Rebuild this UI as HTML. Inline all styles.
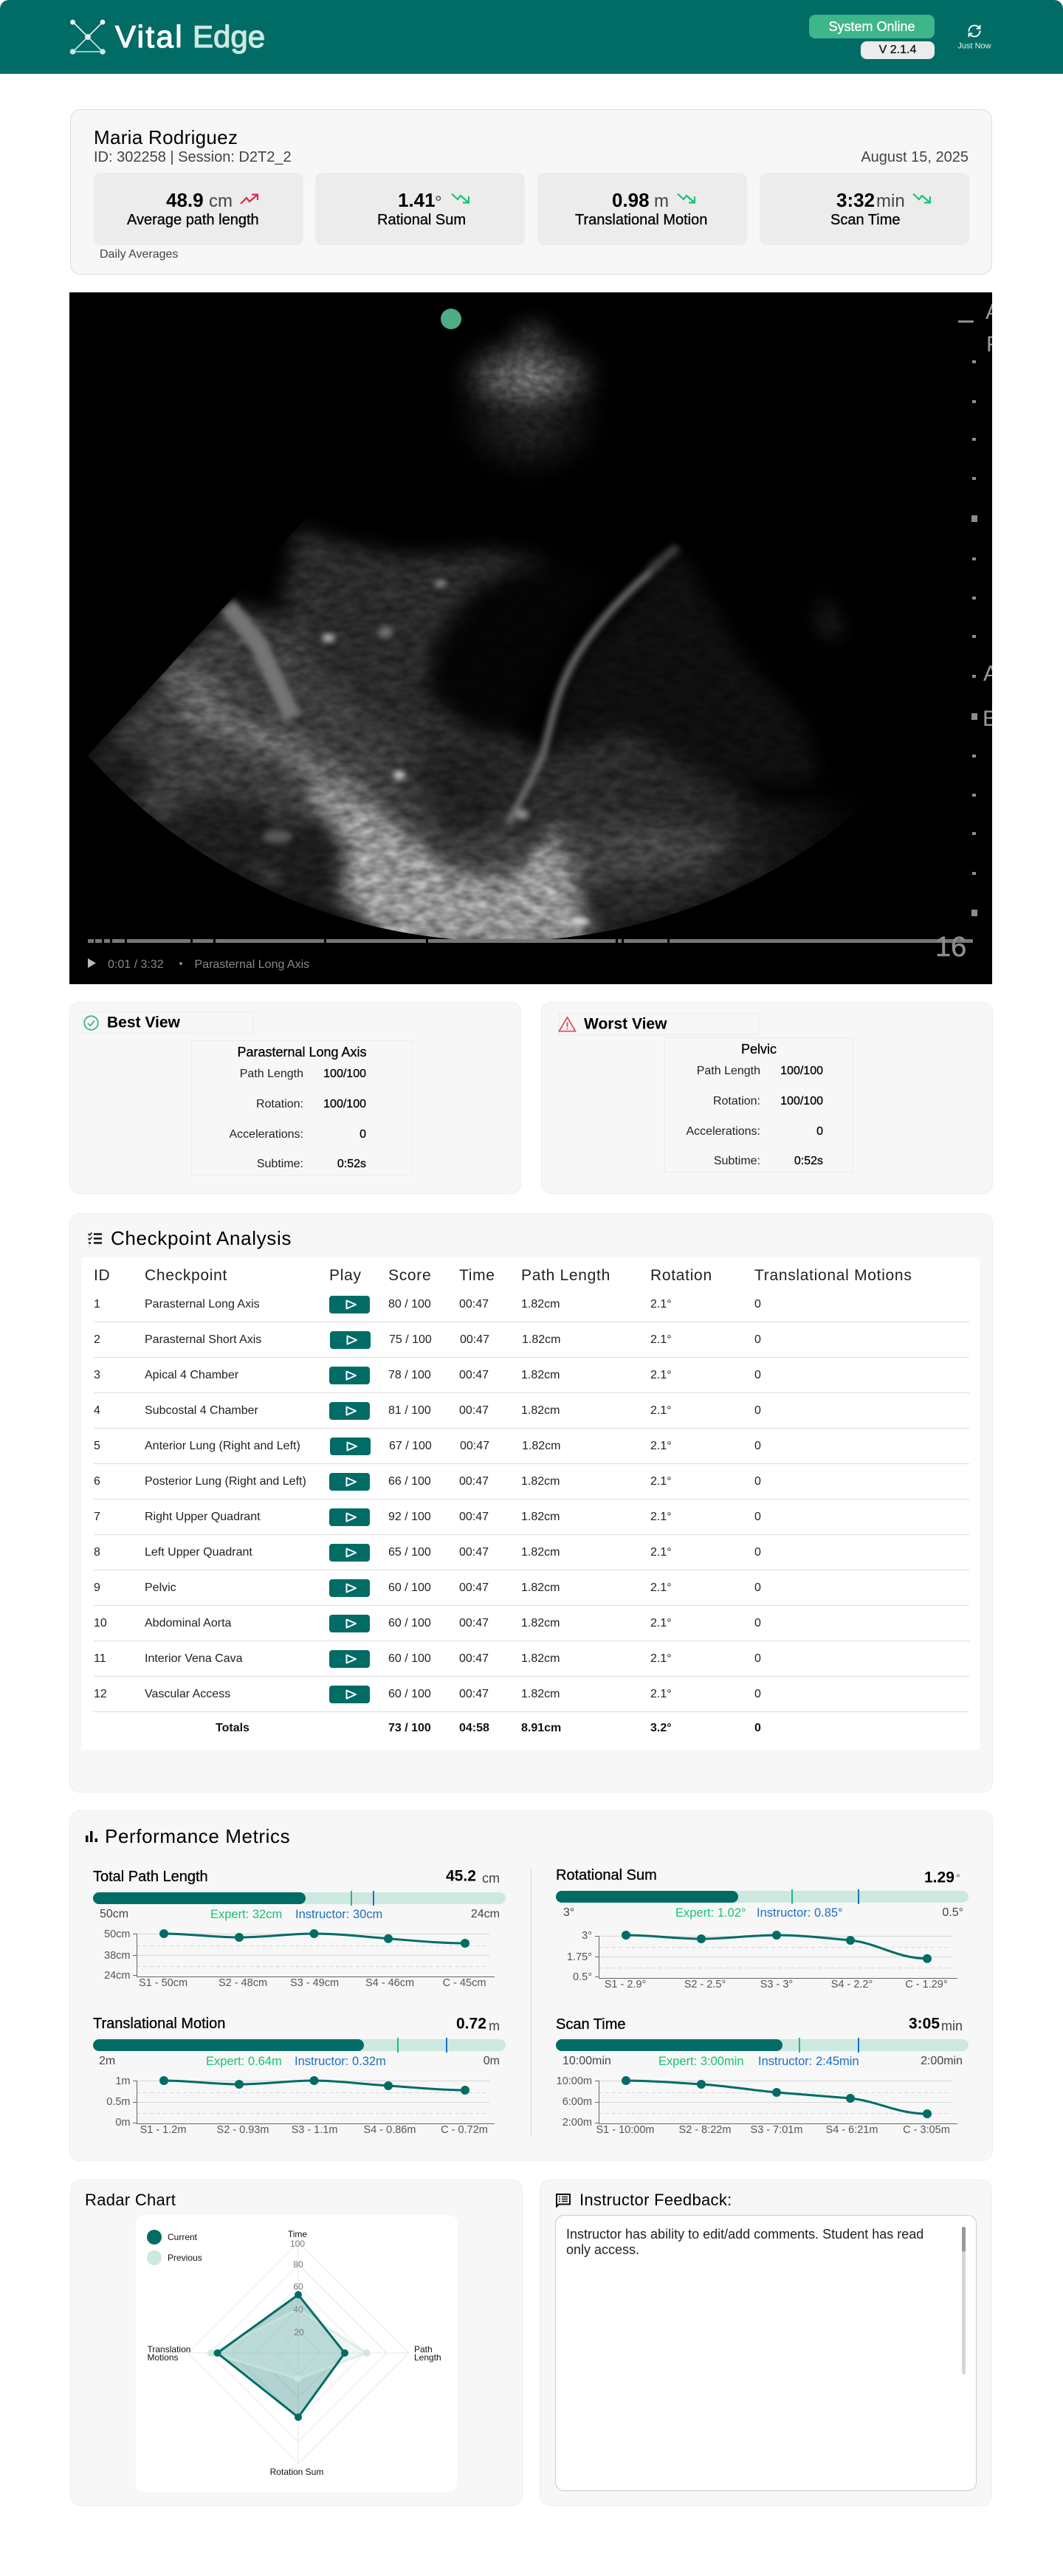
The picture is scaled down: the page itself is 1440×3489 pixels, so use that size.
<!DOCTYPE html>
<html lang="en"><head><meta charset="utf-8"><title>Vital Edge</title>
<style>
html,body{margin:0;padding:0;background:#fff}
body{position:relative;width:1440px;height:3489px;overflow:hidden;font-family:"Liberation Sans",Arial,sans-serif;color:#000}
.a{position:absolute;box-sizing:border-box}
.t{position:absolute;white-space:nowrap;line-height:1;transform:translateY(-50%)}
.c{transform:translate(-50%,-50%)}
.m{-webkit-text-stroke:.3px currentColor}
.card{position:absolute;box-sizing:border-box;background:#f7f7f7;border:1px solid #eee;border-radius:14px}
.box{position:absolute;box-sizing:border-box;background:#ececec;border-radius:10px;top:234px;width:284px;height:98px}
.val{font-size:26px;font-weight:bold}
.unit{font-size:24px;color:#444}
.lab{font-size:20px;top:298px}
.bx{position:absolute;box-sizing:border-box;border:1px solid #ebebeb}
.f16{font-size:16px}.b{font-weight:bold}
.title{font-size:26px;letter-spacing:.65px}
.g{color:#17c274}.bl{color:#1a6fc4}.gr{color:#444}
.bar{position:absolute;height:16px;background:#cde8e1;border-radius:8px}
.fill{position:absolute;height:16px;background:#016c66;border-radius:8px}
.mk{position:absolute;width:2px;height:20px}
table{position:absolute;left:127px;top:1712px;width:1186px;border-collapse:separate;border-spacing:0;table-layout:fixed;font-size:16px;color:#222}
td,th{padding:0;text-align:left;white-space:nowrap;font-weight:normal;box-sizing:border-box}
th{height:31px;font-size:21px;letter-spacing:.7px;color:#222;vertical-align:middle}
tbody td{height:48px;border-bottom:1px solid #ddd;vertical-align:middle;padding-top:1px}
tr.last td{border-bottom:0;height:43px;font-weight:bold;color:#111}
.p{display:block;width:55px;height:24px;background:#016c66;border-radius:4px}
.p svg{display:block}
tr.s td.x{padding-left:1px}
</style></head><body>

<!-- Header -->
<div class="a" style="left:0;top:0;width:1440px;height:100px;background:#016c66;border-radius:12px 12px 0 0"></div>
<svg class="a" style="left:92px;top:23px" width="54" height="54" viewBox="92 23 54 54">
<g stroke="#cde8e1" stroke-width="1.6"><path d="M99 70H139M119 50L99 70M119 50L139 70"/></g>
<g stroke="#e8f5f1" stroke-width="1.6"><path d="M99 30L119 50M139 30L119 50"/></g>
<circle cx="98.5" cy="30" r="3.4" fill="#fff"/><circle cx="139" cy="30" r="3.4" fill="#fff"/>
<circle cx="98.5" cy="70" r="3.8" fill="#cde8e1"/><circle cx="139" cy="70" r="3.8" fill="#cde8e1"/>
<circle cx="119" cy="50" r="4" fill="#d9eee8"/>
</svg>
<div class="t" style="left:156px;top:50px;font-size:42px;letter-spacing:2.4px;color:#fff;-webkit-text-stroke:1.2px #fff">Vital</div>
<div class="t" style="left:261px;top:50px;font-size:42px;color:#cde8e1;-webkit-text-stroke:1.2px #cde8e1">Edge</div>
<div class="a" style="left:1096px;top:20px;width:170px;height:32px;background:#3fb58a;border-radius:8px"></div>
<div class="t c m" style="left:1181px;top:36px;font-size:18px;color:#fff">System Online</div>
<div class="a" style="left:1166px;top:56px;width:100px;height:24px;background:#ececec;border-radius:8px"></div>
<div class="t c m" style="left:1216px;top:68px;font-size:16px;color:#111">V 2.1.4</div>
<svg class="a" style="left:1310px;top:32px" width="20" height="20" viewBox="0 0 24 24" fill="none" stroke="#fff" stroke-width="2.2" stroke-linecap="round" stroke-linejoin="round"><path d="M3 12a9 9 0 0 1 9-9 9.75 9.75 0 0 1 6.74 2.74L21 8"/><path d="M21 3v5h-5"/><path d="M21 12a9 9 0 0 1-9 9 9.75 9.75 0 0 1-6.74-2.74L3 16"/><path d="M8 16H3v5"/></svg>
<div class="t c" style="left:1320px;top:63px;font-size:11px;color:#e8f2f0">Just Now</div>

<!-- Summary card -->
<div class="card" style="left:95px;top:148px;width:1249px;height:224px;border-color:#d5dee3"></div>
<div class="t" style="left:127px;top:186px;font-size:26px;letter-spacing:.3px">Maria Rodriguez</div>
<div class="t gr" style="left:127px;top:213px;font-size:20px">ID: 302258 | Session: D2T2_2</div>
<div class="t gr" style="right:128px;top:213px;font-size:20px">August 15, 2025</div>

<div class="box" style="left:127px"></div><div class="box" style="left:427px"></div><div class="box" style="left:728px"></div><div class="box" style="left:1029px"></div>

<div class="t val" style="left:225px;top:271px">48.9</div><div class="t unit" style="left:283px;top:273px">cm</div>
<svg class="a" style="left:325px;top:262px" width="25" height="15" fill="none" stroke="#e0284a" stroke-width="2.2"><path d="M1 14L9 6L13 11L24 1.5"/><path d="M16 1.5H24V9"/></svg>
<div class="t lab m" style="left:172px">Average path length</div>

<div class="t val" style="left:539px;top:271px">1.41</div><div class="t" style="left:589px;top:275px;font-size:24px;color:#444">°</div>
<svg class="a" style="left:611px;top:261px" width="25" height="15" fill="none" stroke="#17c274" stroke-width="2.2"><path d="M1 1.5L9 9L13 4L24 13.5"/><path d="M24 5V13.5H16"/></svg>
<div class="t lab m" style="left:511px">Rational Sum</div>

<div class="t val" style="left:829px;top:271px">0.98</div><div class="t unit" style="left:886px;top:273px">m</div>
<svg class="a" style="left:917px;top:261px" width="25" height="15" fill="none" stroke="#17c274" stroke-width="2.2"><path d="M1 1.5L9 9L13 4L24 13.5"/><path d="M24 5V13.5H16"/></svg>
<div class="t lab m" style="left:779px">Translational Motion</div>

<div class="t val" style="left:1133px;top:271px">3:32</div><div class="t unit" style="left:1187px;top:273px">min</div>
<svg class="a" style="left:1236px;top:261px" width="25" height="15" fill="none" stroke="#17c274" stroke-width="2.2"><path d="M1 1.5L9 9L13 4L24 13.5"/><path d="M24 5V13.5H16"/></svg>
<div class="t lab m" style="left:1125px">Scan Time</div>

<div class="t f16 gr" style="left:135px;top:345px">Daily Averages</div>

<!-- Ultrasound -->
<svg class="a" style="left:94px;top:396px" width="1250" height="937" viewBox="94 396 1250 937">
<defs>
<filter id="sp" filterUnits="userSpaceOnUse" x="94" y="396" width="1250" height="937" color-interpolation-filters="sRGB">
<feGaussianBlur in="SourceGraphic" stdDeviation="13" result="b"/>
<feTurbulence type="fractalNoise" baseFrequency=".05 .09" numOctaves="2" seed="7" result="n"/>
<feColorMatrix in="n" values="1 0 0 0 0 1 0 0 0 0 1 0 0 0 0 0 0 0 0 1" result="g"/>
<feComposite in="b" in2="g" operator="arithmetic" k1=".9" k2=".55"/>
</filter>
<filter id="sf" filterUnits="userSpaceOnUse" x="94" y="396" width="1250" height="937" color-interpolation-filters="sRGB">
<feGaussianBlur in="SourceGraphic" stdDeviation="4"/>
</filter>
<filter id="sb" filterUnits="userSpaceOnUse" x="94" y="396" width="1250" height="937" color-interpolation-filters="sRGB">
<feGaussianBlur in="SourceGraphic" stdDeviation="14" result="b"/>
<feTurbulence type="fractalNoise" baseFrequency=".08 .12" numOctaves="2" seed="3" result="n"/>
<feColorMatrix in="n" values="1 0 0 0 0 1 0 0 0 0 1 0 0 0 0 0 0 0 0 1" result="g"/>
<feComposite in="b" in2="g" operator="arithmetic" k1=".8" k2=".6"/>
</filter>
<clipPath id="sec"><path d="M425 690L119 1023A750 750 0 0 0 1215 1050L1215 690Z"/></clipPath>
<radialGradient id="r1"><stop offset="0" stop-color="#7c7c7c"/><stop offset=".5" stop-color="#4c4c4c"/><stop offset="1" stop-color="#000"/></radialGradient>
<radialGradient id="r2"><stop offset="0" stop-color="#2c2c2c"/><stop offset="1" stop-color="#000"/></radialGradient>
<linearGradient id="fan" x1="700" y1="1000" x2="1180" y2="1000" gradientUnits="userSpaceOnUse"><stop offset="0" stop-color="#2e2e2e"/><stop offset=".55" stop-color="#242424"/><stop offset="1" stop-color="#000"/></linearGradient>
</defs>
<rect x="94" y="396" width="1250" height="937" fill="#000"/>
<g filter="url(#sb)"><rect x="94" y="396" width="1250" height="500" fill="#000"/>
<ellipse cx="716" cy="565" rx="105" ry="85" fill="url(#r2)"/>
<ellipse cx="716" cy="512" rx="100" ry="56" fill="url(#r1)"/>
<ellipse cx="722" cy="452" rx="26" ry="10" fill="#4a4a4a"/>
</g>
<g clip-path="url(#sec)">
<g filter="url(#sp)">
<rect x="94" y="396" width="1250" height="937" fill="#000"/>
<polygon points="308,818 119,1023 200,1120 400,1225 670,1280 760,1280 700,1120 640,1000 560,900 430,850" fill="#3c3c3c"/>
<polygon points="399,714 459,735 551,753 670,746 753,763 643,796 588,870 578,943 640,990 700,1000 735,1023 689,1115 560,1020 430,900 380,810 395,760" fill="#2a2a2a"/>
<polygon points="771,907 918,741 1000,880 1090,980 1110,1060 1000,1060 850,990 735,1023" fill="#0f0f0f"/>
<polygon points="735,1023 850,990 1040,1090 1210,1080 1160,1170 780,1280 700,1120" fill="url(#fan)"/>
<polygon points="400,1010 470,1060 610,1180 690,1190 760,1110 800,1285 520,1285 465,1210" fill="#969696"/>
<polygon points="740,1130 860,1110 1000,1130 950,1180 800,1200" fill="#404040"/>
<polygon points="643,796 588,870 578,943 640,988 698,995 735,920 775,840 826,790 760,760 700,770" fill="#050505"/>
<polygon points="551,1029 569,1066 606,1133 668,1118 692,1029 640,1012" fill="#202020"/>
<ellipse cx="300" cy="1135" rx="85" ry="55" fill="#1e1e1e"/>
<ellipse cx="420" cy="1170" rx="48" ry="65" fill="#1c1c1c"/>
<ellipse cx="150" cy="1050" rx="55" ry="45" fill="#1c1c1c"/>
<path d="M250 960L395 1017L496 1084" stroke="#6c6c6c" stroke-width="34" fill="none"/>
<path d="M222 900L300 950" stroke="#626262" stroke-width="38" fill="none"/>
<ellipse cx="820" cy="1240" rx="16" ry="44" fill="#242424"/>
<polygon points="1111,802 1146,850 1125,870 1106,850" fill="#181818"/>
</g>
<g filter="url(#sf)" fill="none">
<path d="M308 820L350 872L382 940L396 972" stroke="#747474" stroke-width="24"/>
<path d="M896 762C850 800 800 850 771 907C750 950 745 990 735 1023C720 1060 700 1090 689 1115" stroke="#6c6c6c" stroke-width="9"/>
<path d="M918 741L880 772" stroke="#3c3c3c" stroke-width="12"/>
<g fill="#b0b0b0"><ellipse cx="597" cy="790" rx="8" ry="5" fill="#8a8a8a"/><ellipse cx="445" cy="864" rx="9" ry="6"/><ellipse cx="522" cy="856" rx="10" ry="8" fill="#6e6e6e"/><ellipse cx="541" cy="1050" rx="8" ry="6" fill="#cfcfcf"/><ellipse cx="785" cy="1248" rx="13" ry="5" fill="#e0e0e0"/><ellipse cx="376" cy="1133" rx="20" ry="9" fill="#585858"/><ellipse cx="707" cy="1103" rx="9" ry="7" fill="#909090"/></g>
</g>
</g>
<circle cx="611" cy="432" r="14" fill="#4ead86"/>
<g fill="#8d8d8d"><rect x="1298" y="434" width="21" height="3"/>
<rect x="1317" y="488" width="5" height="4"/><rect x="1317" y="542" width="5" height="4"/><rect x="1317" y="593" width="5" height="4"/><rect x="1317" y="646" width="5" height="4"/><rect x="1316" y="698" width="8" height="9"/><rect x="1317" y="755" width="5" height="4"/><rect x="1317" y="808" width="5" height="4"/><rect x="1317" y="860" width="5" height="4"/><rect x="1317" y="914" width="5" height="4"/><rect x="1316" y="966" width="8" height="9"/><rect x="1317" y="1022" width="5" height="4"/><rect x="1317" y="1075" width="5" height="4"/><rect x="1317" y="1127" width="5" height="4"/><rect x="1317" y="1181" width="5" height="4"/><rect x="1316" y="1232" width="8" height="9"/></g>
<g fill="#9a9a9a" font-size="30" font-family="Liberation Sans,sans-serif"><text x="1335" y="432">A</text><text x="1336" y="476">F</text><text x="1332" y="922">A</text><text x="1331" y="983">B</text></g>
<rect x="119" y="1272" width="1199" height="5" fill="#777"/>
<g fill="#000"><rect x="127" y="1272" width="2" height="5"/><rect x="138" y="1272" width="3" height="5"/><rect x="149" y="1272" width="3" height="5"/><rect x="169" y="1272" width="3" height="5"/><rect x="258" y="1272" width="3" height="5"/><rect x="289" y="1272" width="3" height="5"/><rect x="439" y="1272" width="3" height="5"/><rect x="577" y="1272" width="3" height="5"/><rect x="834" y="1272" width="3" height="5"/><rect x="842" y="1272" width="3" height="5"/><rect x="904" y="1272" width="3" height="5"/></g>
<text x="1267" y="1295" fill="#8c8c8c" font-size="38" stroke="#8c8c8c" stroke-width=".6" font-family="Liberation Sans,sans-serif">16</text>
<polygon points="119,1298 130,1304.5 119,1311" fill="#bbb"/>
<text x="146" y="1311" fill="#888" font-size="16" font-family="Liberation Sans,sans-serif">0:01 / 3:32</text>
<circle cx="245" cy="1305" r="2" fill="#888"/>
<text x="263.500" y="1311" fill="#888" font-size="16" font-family="Liberation Sans,sans-serif">Parasternal Long Axis</text>
</svg>

<!-- Best View -->
<div class="card" style="left:94px;top:1357px;width:612px;height:260px"></div>
<div class="bx" style="left:111px;top:1370px;width:233px;height:30px"></div>
<svg class="a" style="left:113px;top:1375px" width="21" height="21" fill="none" stroke="#3fb58a" stroke-width="1.8"><circle cx="10.500" cy="10.500" r="9.300"/><path d="M6 11l3.200 3.300L15 7.500"/></svg>
<div class="t b" style="left:145px;top:1385px;font-size:21px">Best View</div>
<div class="bx" style="left:259px;top:1409px;width:300px;height:183px"></div>
<div class="t c m" style="left:409px;top:1425px;font-size:18px">Parasternal Long Axis</div>
<div class="t f16" style="right:1029px;top:1455px;color:#222">Path Length</div><div class="t f16 m" style="right:944px;top:1455px">100/100</div>
<div class="t f16" style="right:1029px;top:1496px;color:#222">Rotation:</div><div class="t f16 m" style="right:944px;top:1496px">100/100</div>
<div class="t f16" style="right:1029px;top:1537px;color:#222">Accelerations:</div><div class="t f16 m" style="right:944px;top:1537px">0</div>
<div class="t f16" style="right:1029px;top:1577px;color:#222">Subtime:</div><div class="t f16 m" style="right:944px;top:1577px">0:52s</div>

<!-- Worst View -->
<div class="card" style="left:733px;top:1357px;width:612px;height:260px"></div>
<div class="bx" style="left:757px;top:1372px;width:271px;height:30px"></div>
<svg class="a" style="left:756px;top:1376px" width="25" height="22" fill="none" stroke="#e84057" stroke-width="1.7"><path d="M12.500 2L23.500 20.700H1.300Z"/><path d="M12.500 8.500v6.500M12.500 16.500v2"/></svg>
<div class="t b" style="left:791px;top:1387px;font-size:21px">Worst View</div>
<div class="bx" style="left:900px;top:1405px;width:256px;height:183px"></div>
<div class="t c m" style="left:1028px;top:1421px;font-size:18px">Pelvic</div>
<div class="t f16" style="right:410px;top:1451px;color:#222">Path Length</div><div class="t f16 m" style="right:325px;top:1451px">100/100</div>
<div class="t f16" style="right:410px;top:1492px;color:#222">Rotation:</div><div class="t f16 m" style="right:325px;top:1492px">100/100</div>
<div class="t f16" style="right:410px;top:1533px;color:#222">Accelerations:</div><div class="t f16 m" style="right:325px;top:1533px">0</div>
<div class="t f16" style="right:410px;top:1573px;color:#222">Subtime:</div><div class="t f16 m" style="right:325px;top:1573px">0:52s</div>

<!-- Checkpoint -->
<div class="card" style="left:94px;top:1643px;width:1251px;height:785px"></div>
<svg class="a" style="left:118px;top:1668px" width="22" height="19" fill="none" stroke="#111"><path d="M9 3.500H20M9 9.500H20M9 15.500H20" stroke-width="2.400"/><path d="M1.500 3L3.300 5L6.500 1.500M1.500 9L3.300 11L6.500 7.500" stroke-width="1.500"/><path d="M2 15.500h3" stroke-width="2.400"/></svg>
<div class="t title" style="left:150px;top:1677px">Checkpoint Analysis</div>
<div class="a" style="left:111px;top:1703px;width:1216px;height:667px;background:#fff"></div>
<table>
<colgroup><col style="width:69px"><col style="width:250px"><col style="width:80px"><col style="width:96px"><col style="width:84px"><col style="width:175px"><col style="width:141px"><col style="width:291px"></colgroup>
<thead><tr><th>ID</th><th>Checkpoint</th><th>Play</th><th>Score</th><th>Time</th><th>Path Length</th><th>Rotation</th><th>Translational Motions</th></tr></thead>
<tbody>
<tr><td>1</td><td>Parasternal Long Axis</td><td><span class="p"><svg width="55" height="24" fill="none" stroke="#fff" stroke-width="2" stroke-linejoin="round"><path d="M23.500 6.500L36 12L23.500 17.500Z"/></svg></span></td><td>80 / 100</td><td>00:47</td><td>1.82cm</td><td>2.1°</td><td>0</td></tr>
<tr class="s"><td>2</td><td>Parasternal Short Axis</td><td class="x"><span class="p"><svg width="55" height="24" fill="none" stroke="#fff" stroke-width="2" stroke-linejoin="round"><path d="M23.500 6.500L36 12L23.500 17.500Z"/></svg></span></td><td class="x">75 / 100</td><td class="x">00:47</td><td class="x">1.82cm</td><td>2.1°</td><td>0</td></tr>
<tr><td>3</td><td>Apical 4 Chamber</td><td><span class="p"><svg width="55" height="24" fill="none" stroke="#fff" stroke-width="2" stroke-linejoin="round"><path d="M23.500 6.500L36 12L23.500 17.500Z"/></svg></span></td><td>78 / 100</td><td>00:47</td><td>1.82cm</td><td>2.1°</td><td>0</td></tr>
<tr><td>4</td><td>Subcostal 4 Chamber</td><td><span class="p"><svg width="55" height="24" fill="none" stroke="#fff" stroke-width="2" stroke-linejoin="round"><path d="M23.500 6.500L36 12L23.500 17.500Z"/></svg></span></td><td>81 / 100</td><td>00:47</td><td>1.82cm</td><td>2.1°</td><td>0</td></tr>
<tr class="s"><td>5</td><td>Anterior Lung (Right and Left)</td><td class="x"><span class="p"><svg width="55" height="24" fill="none" stroke="#fff" stroke-width="2" stroke-linejoin="round"><path d="M23.500 6.500L36 12L23.500 17.500Z"/></svg></span></td><td class="x">67 / 100</td><td class="x">00:47</td><td class="x">1.82cm</td><td>2.1°</td><td>0</td></tr>
<tr><td>6</td><td>Posterior Lung (Right and Left)</td><td><span class="p"><svg width="55" height="24" fill="none" stroke="#fff" stroke-width="2" stroke-linejoin="round"><path d="M23.500 6.500L36 12L23.500 17.500Z"/></svg></span></td><td>66 / 100</td><td>00:47</td><td>1.82cm</td><td>2.1°</td><td>0</td></tr>
<tr><td>7</td><td>Right Upper Quadrant</td><td><span class="p"><svg width="55" height="24" fill="none" stroke="#fff" stroke-width="2" stroke-linejoin="round"><path d="M23.500 6.500L36 12L23.500 17.500Z"/></svg></span></td><td>92 / 100</td><td>00:47</td><td>1.82cm</td><td>2.1°</td><td>0</td></tr>
<tr><td>8</td><td>Left Upper Quadrant</td><td><span class="p"><svg width="55" height="24" fill="none" stroke="#fff" stroke-width="2" stroke-linejoin="round"><path d="M23.500 6.500L36 12L23.500 17.500Z"/></svg></span></td><td>65 / 100</td><td>00:47</td><td>1.82cm</td><td>2.1°</td><td>0</td></tr>
<tr><td>9</td><td>Pelvic</td><td><span class="p"><svg width="55" height="24" fill="none" stroke="#fff" stroke-width="2" stroke-linejoin="round"><path d="M23.500 6.500L36 12L23.500 17.500Z"/></svg></span></td><td>60 / 100</td><td>00:47</td><td>1.82cm</td><td>2.1°</td><td>0</td></tr>
<tr><td>10</td><td>Abdominal Aorta</td><td><span class="p"><svg width="55" height="24" fill="none" stroke="#fff" stroke-width="2" stroke-linejoin="round"><path d="M23.500 6.500L36 12L23.500 17.500Z"/></svg></span></td><td>60 / 100</td><td>00:47</td><td>1.82cm</td><td>2.1°</td><td>0</td></tr>
<tr><td>11</td><td>Interior Vena Cava</td><td><span class="p"><svg width="55" height="24" fill="none" stroke="#fff" stroke-width="2" stroke-linejoin="round"><path d="M23.500 6.500L36 12L23.500 17.500Z"/></svg></span></td><td>60 / 100</td><td>00:47</td><td>1.82cm</td><td>2.1°</td><td>0</td></tr>
<tr><td>12</td><td>Vascular Access</td><td><span class="p"><svg width="55" height="24" fill="none" stroke="#fff" stroke-width="2" stroke-linejoin="round"><path d="M23.500 6.500L36 12L23.500 17.500Z"/></svg></span></td><td>60 / 100</td><td>00:47</td><td>1.82cm</td><td>2.1°</td><td>0</td></tr>
<tr class="last"><td></td><td style="padding-left:96px">Totals</td><td></td><td>73 / 100</td><td>04:58</td><td>8.91cm</td><td>3.2°</td><td>0</td></tr>
</tbody></table>

<!-- Performance -->
<div class="card" style="left:94px;top:2452px;width:1251px;height:475px"></div>
<svg class="a" style="left:116px;top:2480px" width="16" height="15" fill="#111"><rect x="0" y="6" width="3.500" height="9"/><rect x="6" y="0" width="3.500" height="15"/><rect x="12.500" y="10" width="3.500" height="5"/></svg>
<div class="t title" style="left:142px;top:2487px;letter-spacing:.6px">Performance Metrics</div>
<div class="a" style="left:719px;top:2531px;width:1px;height:362px;background:#d4d4d4"></div>

<div class="t m" style="left:126px;top:2542px;font-size:20px">Total Path Length</div>
<div class="t b" style="left:604px;top:2541px;font-size:21px">45.2</div><div class="t gr" style="left:653px;top:2544px;font-size:18px">cm</div>
<div class="bar" style="left:126px;top:2563px;width:559px"></div><div class="fill" style="left:126px;top:2563px;width:288px"></div>
<div class="mk" style="left:475px;top:2561px;background:#17c274"></div><div class="mk" style="left:505px;top:2561px;background:#1a6fc4"></div>
<div class="t f16 gr" style="left:135px;top:2593px">50cm</div><div class="t g" style="left:285px;top:2593px;font-size:16.500px">Expert: 32cm</div><div class="t bl" style="left:400px;top:2593px;font-size:16.500px">Instructor: 30cm</div><div class="t f16 gr" style="right:763px;top:2593px">24cm</div>

<div class="t m" style="left:126px;top:2741px;font-size:20px">Translational Motion</div>
<div class="t b" style="left:618px;top:2741px;font-size:21px">0.72</div><div class="t gr" style="left:662px;top:2744px;font-size:18px">m</div>
<div class="bar" style="left:126px;top:2762px;width:559px"></div><div class="fill" style="left:126px;top:2762px;width:367px"></div>
<div class="mk" style="left:538px;top:2760px;background:#17c274"></div><div class="mk" style="left:604px;top:2760px;background:#1a6fc4"></div>
<div class="t f16 gr" style="left:134px;top:2792px">2m</div><div class="t g" style="left:279px;top:2792px;font-size:16.500px">Expert: 0.64m</div><div class="t bl" style="left:399px;top:2792px;font-size:16.500px">Instructor: 0.32m</div><div class="t f16 gr" style="right:763px;top:2792px">0m</div>

<div class="t m" style="left:753px;top:2540px;font-size:20px">Rotational Sum</div>
<div class="t b" style="left:1252px;top:2543px;font-size:21px">1.29</div><div class="t gr" style="left:1295px;top:2543px;font-size:14px">°</div>
<div class="bar" style="left:753px;top:2561px;width:559px"></div><div class="fill" style="left:753px;top:2561px;width:247px"></div>
<div class="mk" style="left:1072px;top:2559px;background:#17c274"></div><div class="mk" style="left:1162px;top:2559px;background:#1a6fc4"></div>
<div class="t f16 gr" style="left:763px;top:2591px">3°</div><div class="t g" style="left:915px;top:2591px;font-size:16.500px">Expert: 1.02°</div><div class="t bl" style="left:1025px;top:2591px;font-size:16.500px">Instructor: 0.85°</div><div class="t f16 gr" style="right:135px;top:2591px">0.5°</div>

<div class="t m" style="left:753px;top:2742px;font-size:20px">Scan Time</div>
<div class="t b" style="left:1231px;top:2741px;font-size:21px">3:05</div><div class="t gr" style="left:1275px;top:2744px;font-size:18px">min</div>
<div class="bar" style="left:753px;top:2762px;width:559px"></div><div class="fill" style="left:753px;top:2762px;width:307px"></div>
<div class="mk" style="left:1082px;top:2760px;background:#17c274"></div><div class="mk" style="left:1162px;top:2760px;background:#1a6fc4"></div>
<div class="t f16 gr" style="left:762px;top:2792px">10:00min</div><div class="t g" style="left:892px;top:2792px;font-size:16.500px">Expert: 3:00min</div><div class="t bl" style="left:1027px;top:2792px;font-size:16.500px">Instructor: 2:45min</div><div class="t f16 gr" style="right:136px;top:2792px">2:00min</div>

<svg class="a" style="left:0;top:2600px" width="1440" height="310" viewBox="0 2600 1440 310" font-family="Liberation Sans,sans-serif" font-size="14.500" fill="#555">
<g stroke="#d6d6d6" fill="none">
<path d="M185 2619.500H663M185 2648.500H663M185 2818.500H663M185 2847.500H663M811 2622.500H1289M811 2650.500H1289M811 2818.500H1289M811 2847.500H1289"/>
<path stroke-dasharray="5 4" d="M185 2635.500H663M185 2663.500H663M185 2834.500H663M185 2862.500H663M811 2637.500H1289M811 2665.500H1289M811 2834.500H1289M811 2862.500H1289"/>
</g>
<g stroke="#666" fill="none">
<path d="M185.500 2619V2677.500H670M180 2619.500H185M180 2648.500H185M180 2675.500H185"/>
<path d="M185.500 2818V2876.500H670M180 2818.500H185M180 2847.500H185M180 2875.500H185"/>
<path d="M811.500 2622V2679.500H1297M806 2622.500H811M806 2650.500H811M806 2677.500H811"/>
<path d="M811.500 2818V2876.500H1297M806 2818.500H811M806 2847.500H811M806 2875.500H811"/>
</g>
<g fill="none" stroke="#016c66" stroke-width="3">
<path d="M222 2619C256 2619 290 2624 324 2624S392 2619 425.500 2619S492 2623 526 2625.700S596 2632 630 2632"/>
<path d="M222 2818C256 2818 290 2823 324 2823S392 2818 425.500 2818S492 2823 526 2825S596 2831 630 2831"/>
<path d="M848 2621C882 2621 916 2626 950 2626S1018 2621 1052 2621S1118 2625 1152 2628C1190 2632 1215 2652.700 1256 2652.700"/>
<path d="M848 2818C882 2818 916 2821 950 2823S1018 2831 1052 2834S1118 2839 1152 2842C1190 2846 1215 2863 1256 2863"/>
</g>
<g fill="#016c66">
<circle cx="222" cy="2619" r="6"/><circle cx="324" cy="2624" r="6"/><circle cx="425.500" cy="2619" r="6"/><circle cx="526" cy="2625.700" r="6"/><circle cx="630" cy="2632" r="6"/>
<circle cx="222" cy="2818" r="6"/><circle cx="324" cy="2823" r="6"/><circle cx="425.500" cy="2818" r="6"/><circle cx="526" cy="2825" r="6"/><circle cx="630" cy="2831" r="6"/>
<circle cx="848" cy="2621" r="6"/><circle cx="950" cy="2626" r="6"/><circle cx="1052" cy="2621" r="6"/><circle cx="1152" cy="2628" r="6"/><circle cx="1256" cy="2652.700" r="6"/>
<circle cx="848" cy="2818" r="6"/><circle cx="950" cy="2823" r="6"/><circle cx="1052" cy="2834" r="6"/><circle cx="1152" cy="2842" r="6"/><circle cx="1256" cy="2863" r="6"/>
</g>
<g text-anchor="end">
<text x="176.500" y="2624">50cm</text><text x="176.500" y="2653">38cm</text><text x="176.500" y="2680">24cm</text>
<text x="176.500" y="2823">1m</text><text x="176.500" y="2851">0.5m</text><text x="176.500" y="2879">0m</text>
<text x="802" y="2626">3°</text><text x="802" y="2655">1.75°</text><text x="802" y="2682">0.5°</text>
<text x="802" y="2823">10:00m</text><text x="802" y="2851">6:00m</text><text x="802" y="2879">2:00m</text>
</g>
<g text-anchor="middle">
<text x="221" y="2690">S1 - 50cm</text><text x="329" y="2690">S2 - 48cm</text><text x="426" y="2690">S3 - 49cm</text><text x="528" y="2690">S4 - 46cm</text><text x="629" y="2690">C - 45cm</text>
<text x="221" y="2889">S1 - 1.2m</text><text x="329" y="2889">S2 - 0.93m</text><text x="426" y="2889">S3 - 1.1m</text><text x="528" y="2889">S4 - 0.86m</text><text x="629" y="2889">C - 0.72m</text>
<text x="847" y="2692">S1 - 2.9°</text><text x="955" y="2692">S2 - 2.5°</text><text x="1052" y="2692">S3 - 3°</text><text x="1154" y="2692">S4 - 2.2°</text><text x="1255" y="2692">C - 1.29°</text>
<text x="847" y="2889">S1 - 10:00m</text><text x="955" y="2889">S2 - 8:22m</text><text x="1052" y="2889">S3 - 7:01m</text><text x="1154" y="2889">S4 - 6:21m</text><text x="1255" y="2889">C - 3:05m</text>
</g>
</svg>

<!-- Radar -->
<div class="card" style="left:95px;top:2952px;width:613px;height:442px"></div>
<div class="t" style="left:115px;top:2980px;font-size:22px;letter-spacing:.3px">Radar Chart</div>
<div class="a" style="left:184px;top:3000px;width:436px;height:375px;background:#fff;border-radius:12px"></div>
<svg class="a" style="left:184px;top:3000px" width="436" height="375" viewBox="184 3000 436 375" font-family="Liberation Sans,sans-serif" font-size="12">
<circle cx="209" cy="3030" r="10" fill="#016c66"/><circle cx="209" cy="3058" r="10" fill="#cde8e1"/>
<text x="227" y="3034" fill="#111">Current</text><text x="227" y="3062" fill="#111">Previous</text>
<g fill="none" stroke="#efefef" stroke-width="1.500">
<polygon points="404,3037 554,3187 404,3337 254,3187"/><polygon points="404,3067 524,3187 404,3307 284,3187"/><polygon points="404,3097 494,3187 404,3277 314,3187"/><polygon points="404,3127 464,3187 404,3247 344,3187"/><polygon points="404,3157 434,3187 404,3217 374,3187"/>
<path d="M404 3037V3337M254 3187H554"/></g>
<polygon points="404,3108 467,3187 404,3274 294.500,3187" fill="#016c66" fill-opacity=".3"/>
<polygon points="404,3127 496.500,3187 404,3222 286,3187" fill="#cde8e1" fill-opacity=".35" stroke="#cde8e1" stroke-opacity=".65" stroke-width="3"/>
<g fill="#cde8e1"><circle cx="404" cy="3127" r="5" fill-opacity=".5"/><circle cx="496.500" cy="3187" r="5"/><circle cx="404" cy="3222" r="5" fill-opacity=".7"/><circle cx="286" cy="3187" r="5"/></g>
<polygon points="404,3108 467,3187 404,3274 294.500,3187" fill="none" stroke="#016c66" stroke-width="3"/>
<g fill="#016c66"><circle cx="404" cy="3108" r="5"/><circle cx="467" cy="3187" r="5"/><circle cx="404" cy="3274" r="5"/><circle cx="294.500" cy="3187" r="5"/></g>
<g fill="#777" text-anchor="middle"><text x="403" y="3043">100</text><text x="404" y="3071">80</text><text x="404" y="3101">60</text><text x="404" y="3132">40</text><text x="405" y="3163">20</text></g>
<g fill="#111"><text x="403" y="3030" text-anchor="middle">Time</text><text x="561" y="3186">Path</text><text x="561" y="3197">Length</text><text x="199.500" y="3186">Translation</text><text x="199.500" y="3197">Motions</text><text x="402" y="3352" text-anchor="middle">Rotation Sum</text></g>
</svg>

<!-- Feedback -->
<div class="card" style="left:731px;top:2952px;width:613px;height:442px"></div>
<svg class="a" style="left:752px;top:2970px" width="22" height="20" fill="none" stroke="#111"><path d="M2 2H20V15.500H5L2 18.500Z" stroke-width="2"/><path d="M9 5.500H17M9 8.500H17M9 11.500H17M5 5.500H7M5 8.500H7M5 11.500H7" stroke-width="1.500"/></svg>
<div class="t" style="left:785px;top:2980px;font-size:22px;letter-spacing:.3px">Instructor Feedback:</div>
<div class="a" style="left:752px;top:3000px;width:571px;height:374px;background:#fff;border:1px solid #ccc;border-radius:12px"></div>
<div class="a" style="left:767px;top:3016px;width:520px;font-size:18px;line-height:21px;color:#222">Instructor has ability to edit/add comments. Student has read only access.</div>
<div class="a" style="left:1303px;top:3016px;width:5px;height:200px;background:#d6d6d6;border-radius:3px"></div>
<div class="a" style="left:1303px;top:3016px;width:5px;height:34px;background:#999;border-radius:3px"></div>
</body></html>
